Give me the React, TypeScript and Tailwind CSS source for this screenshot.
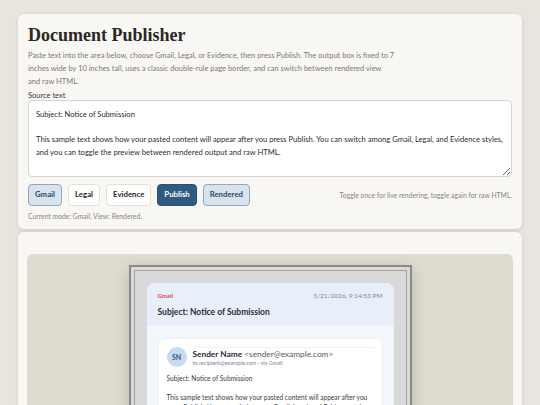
import React from "react";

const sans = "font-['Lato','Liberation_Sans',sans-serif]";

function ModeButton({ label, variant }: { label: string; variant: "active" | "plain" | "primary" }) {
  const styles = {
    active: "bg-[#d8e3ee] border-[#8ea6bf] text-[#2c4a66]",
    plain: "bg-white border-[#e4e0d8] text-[#2a2724]",
    primary: "bg-[#2f5b82] border-[#2a5277] text-white",
  };
  return (
    <button
      className={`h-[22px] rounded-[4px] border px-[6px] text-[7.8px] font-bold ${styles[variant]}`}
    >
      {label}
    </button>
  );
}

export default function App() {
  const sample =
    "Subject: Notice of Submission\n\nThis sample text shows how your pasted content will appear after you press Publish. You can switch among Gmail, Legal, and Evidence styles, and you can toggle the preview between rendered output and raw HTML.";

  return (
    <div className={`min-h-screen bg-[#e8e5df] px-[18px] pt-[14px] ${sans}`}>
      <div className="flex flex-col gap-[3px]">
        {/* editor card */}
        <section className="rounded-[6px] bg-[#f8f7f3] px-[10px] pb-[8px] pt-[10px] shadow-[0_1px_4px_rgba(0,0,0,0.12)]">
          <h1 className="font-['Liberation_Serif',serif] text-[18px] font-bold leading-[22px] text-[#2a2724]">
            Document Publisher
          </h1>
          <p className="mt-[3px] whitespace-nowrap text-[7.5px] leading-[13px] text-[#7d7873]">
            Paste text into the area below, choose Gmail, Legal, or Evidence, then press Publish. The output box is fixed to 7
            <br />
            inches wide by 10 inches tall, uses a classic double-rule page border, and can switch between rendered view
            <br />
            and raw HTML.
          </p>

          <label className="mt-[4px] block text-[7.5px] leading-[8px] text-[#3d3a36]">Source text</label>
          <textarea
            className="block h-[77px] w-full resize-y rounded-[4px] border border-[#d9d5cd] bg-white px-[7px] py-[7px] text-[7.6px] leading-[12.5px] text-[#2f2c29] outline-none"
            defaultValue={sample}
          />

          <div className="mt-[7px] flex items-center justify-between">
            <div className="flex gap-[6px]">
              <ModeButton label="Gmail" variant="active" />
              <ModeButton label="Legal" variant="plain" />
              <ModeButton label="Evidence" variant="plain" />
              <ModeButton label="Publish" variant="primary" />
              <ModeButton label="Rendered" variant="active" />
            </div>
            <span className="text-[6.8px] text-[#8a857f]">
              Toggle once for live rendering, toggle again for raw HTML.
            </span>
          </div>
          <p className="mt-[5px] text-[6.8px] leading-[10px] text-[#8a857f]">Current mode: Gmail. View: Rendered.</p>
        </section>

        {/* preview card */}
        <section className="rounded-[6px] bg-[#f8f7f3] px-[9px] pt-[22px] shadow-[0_1px_4px_rgba(0,0,0,0.12)]">
          <div className="flex justify-center rounded-t-[6px] bg-[#dedbd0] pt-[11px]">
            <div className="w-[283px] border-2 border-[#8a8a8a] bg-[#d9d9d9] p-[3px] shadow-[0_4px_14px_rgba(0,0,0,0.18)]">
              <div className="border border-[#a3a3a3] px-[12px] pt-[12px] pb-[20px]">
                <div className="overflow-hidden rounded-[8px] bg-[#f3f6fb]">
                  <div className="bg-[#e8effa] px-[11px] pb-[8px] pt-[8px]">
                    <div className="flex items-center justify-between">
                      <span className="text-[6px] font-bold text-[#d9473c]">Gmail</span>
                      <span className="text-[6.5px] text-[#7b8593]">5/21/2026, 9:14:53 PM</span>
                    </div>
                    <div className="mt-[5px] text-[8.5px] font-bold leading-[12px] text-[#2a2d33]">
                      Subject: Notice of Submission
                    </div>
                  </div>
                  <div className="px-[11px] pt-[12px] pb-[11px]">
                    <div className="rounded-[7px] border border-[#edf0f4] bg-white px-[8px] pb-[10px] pt-[8px]">
                      <div className="flex items-center gap-[6px]">
                        <div className="flex h-[20px] w-[20px] items-center justify-center rounded-full bg-[#c8daf0] text-[7px] font-bold text-[#2f5b82]">
                          SN
                        </div>
                        <div className="flex-1 border-t border-[#f1f2f4] pt-[1px]">
                          <div className="text-[8.3px] leading-[10px] text-[#2a2d33]">
                            <span className="font-bold">Sender Name</span>{" "}
                            <span className="text-[#555a62]">&lt;sender@example.com&gt;</span>
                          </div>
                          <div className="text-[5.5px] leading-[8px] text-[#7b8593]">
                            to recipient@example.com · via Gmail
                          </div>
                        </div>
                      </div>
                      <p className="mt-[6px] text-[6.6px] leading-[10px] text-[#3a3d44]">Subject: Notice of Submission</p>
                      <p className="mt-[9px] text-[6.6px] leading-[10px] text-[#3a3d44]">
                        This sample text shows how your pasted content will appear after you press Publish. You can
                        switch among Gmail, Legal, and Evidence styles.
                      </p>
                    </div>
                  </div>
                </div>
              </div>
            </div>
          </div>
        </section>
      </div>
    </div>
  );
}
